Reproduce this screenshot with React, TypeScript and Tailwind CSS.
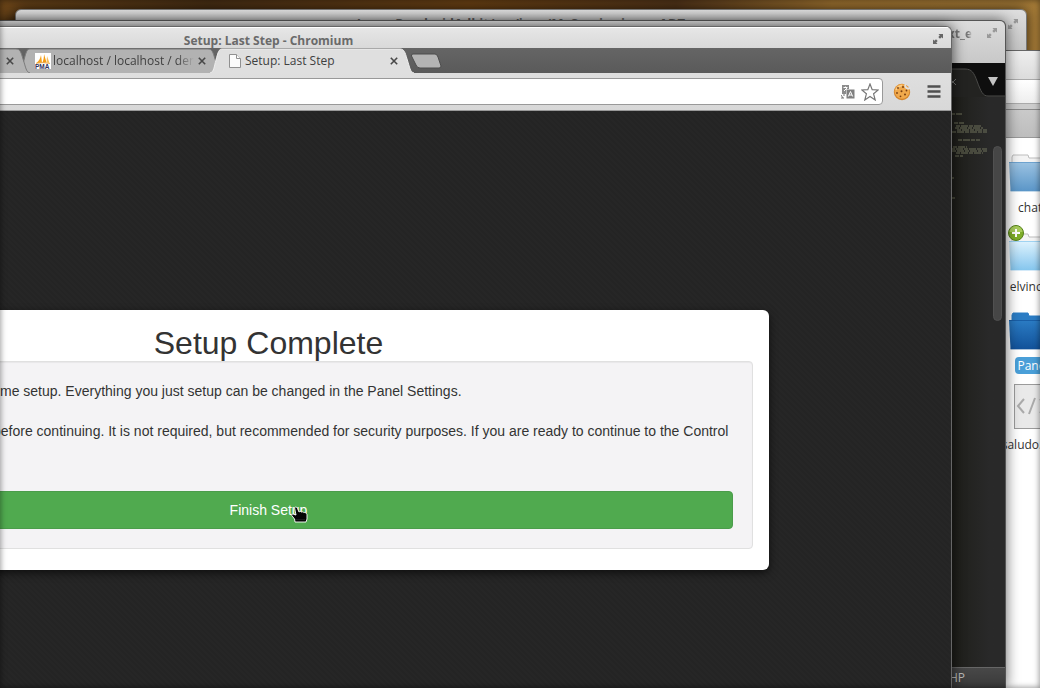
import React from 'react';

interface TabProps {
	title: string;
	icon: React.ReactNode;
	active?: boolean;
	className?: string;
}

interface DesktopItem {
	name: string;
	kind: 'folder' | 'new' | 'open' | 'file';
	selected?: boolean;
}

const FILES: DesktopItem[] = [
	{ name: 'chats', kind: 'folder' },
	{ name: 'elvincoo', kind: 'new' },
	{ name: 'Panel', kind: 'open', selected: true },
	{ name: 'saludo.php', kind: 'file' },
];

// [x, y, width] of each stroke in the editor minimap
const MINIMAP: [number, number, number][] = [
	[0, 5, 11],
	[3, 14, 10],
	[5, 17, 26],
	[4, 19, 28],
	[6, 21, 30],
	[1, 23, 35],
	[7, 31, 22],
	[2, 38, 14],
	[0, 40, 36],
	[1, 42, 35],
	[5, 44, 27],
	[4, 47, 8],
	[0, 69, 3],
	[0, 89, 5],
];

const FOLDER_COLORS = {
	folder: ['#9cc3e2', '#5b96c8'],
	new: ['#dff3fe', '#86c6ee'],
	open: ['#2b7cc4', '#12529a'],
};

function ExpandIcon({ className }: { className: string }) {
	return (
		<svg viewBox="0 0 10 10" className={className} fill="currentColor" aria-hidden="true">
			<path d="M5.500 0H10v4.500L8.500 3.200 7 4.700 5.300 3 6.800 1.500z" />
			<path d="M4.500 10H0V5.500l1.500 1.300L3 5.300 4.700 7 3.200 8.500z" />
		</svg>
	);
}

function CloseIcon() {
	return (
		<svg viewBox="0 0 8 8" className="size-2" stroke="#484848" strokeWidth="1.6" aria-hidden="true">
			<path d="M.8.8l6.4 6.4M7.2.8L.8 7.2" />
		</svg>
	);
}

function PageIcon() {
	return (
		<svg viewBox="0 0 12 14" className="h-3.5 w-3" fill="#fbfbfb" stroke="#909090" aria-hidden="true">
			<path d="M.5.5h7l4 4v9H.5z" />
			<path d="M7.5.5v4h4" />
		</svg>
	);
}

function PmaIcon() {
	return (
		<svg viewBox="0 0 16 16" className="size-4" aria-hidden="true">
			<rect width="16" height="16" fill="#fff" />
			<path d="M1.500 10C4 8 5.400 5 6 2l1 7.500z" fill="#f6a21c" />
			<path d="M7.500 9.500C8.500 7 9 4 9 1l2.500 8.500z" fill="#f39a10" />
			<path d="M11.500 9.500L12 3l2.500 7z" fill="#f9bd55" />
			<path d="M1 10.300q7-1.500 14 .2" stroke="#e08a1a" fill="none" strokeWidth=".7" />
			<text x="0" y="16" fontSize="6.500" fontWeight="bold" fontFamily="Liberation Sans, sans-serif" fill="#30305c">
				PMA
			</text>
		</svg>
	);
}

function Tab({ title, icon, active = false, className = '' }: TabProps) {
	return (
		<div className={`relative -ml-3 h-[25px] w-[204px] shrink-0 ${className}`}>
			<svg viewBox="0 0 204 25" className="absolute inset-0 size-full" aria-hidden="true">
				<path
					d="M0 25C4 24 4 19 6 12 8 4 9 1 12 1H190C194 1 195 4 197 11c3 9 3 13 7 14z"
					fill={active ? '#dfdfdf' : '#b2b2b2'}
				/>
				<path
					d="M0 25C4 24 4 19 6 12 8 4 9 1 12 1H190C194 1 195 4 197 11c3 9 3 13 7 14"
					fill="none"
					stroke={active ? '#efefef' : '#7a7a7a'}
				/>
			</svg>
			<button
				type="button"
				className="relative flex h-full w-full items-center pr-7 pl-[15px] text-left text-[12px] text-[#404040]"
			>
				<span className="flex w-5 shrink-0 justify-center">{icon}</span>
				<span
					className={`overflow-hidden whitespace-nowrap ${active ? '' : '[mask-image:linear-gradient(to_right,black_88%,transparent)]'}`}
				>
					{title}
				</span>
			</button>
			<button type="button" aria-label="Close tab" className="absolute top-[9px] right-4">
				<CloseIcon />
			</button>
		</div>
	);
}

function TranslateIcon() {
	return (
		<svg viewBox="0 0 14 14" className="size-3.5" aria-hidden="true">
			<path d="M1 0h7v4H5v5H1z" fill="#8c8c8c" />
			<path d="M2.500 2.500h4M4.500 1.500v1M3 6l3-3" stroke="#fff" fill="none" />
			<rect x="5.500" y="4.500" width="8" height="9" fill="#808080" />
			<path d="M7.300 11.500L9.500 6.500l2.200 5M8 10h3" stroke="#fff" fill="none" />
			<path d="M0 10l2 3m-2 0h3m-1-3h2" stroke="#777" fill="none" />
		</svg>
	);
}

function CookieIcon() {
	return (
		<svg viewBox="0 0 18 18" className="size-[18px]" aria-hidden="true">
			<circle cx="9" cy="9" r="8.200" fill="#d4852c" />
			<circle cx="9" cy="8.300" r="7.400" fill="#f0a94c" />
			<path d="M3 7q2-4 6-4.500" stroke="#f9cd8a" strokeWidth="1.500" fill="none" />
			<g fill="#7a3f12">
				<circle cx="5" cy="5" r=".9" />
				<circle cx="10" cy="4" r="1" />
				<circle cx="13.500" cy="7.500" r=".9" />
				<circle cx="8.500" cy="8.300" r="1" />
				<circle cx="4" cy="10" r=".9" />
				<circle cx="12" cy="11.500" r="1" />
				<circle cx="7.500" cy="13.300" r=".9" />
			</g>
			<path d="M13 .5a3 3 0 0 0 4.500 4" stroke="#dfdfdf" strokeWidth="2" fill="none" />
		</svg>
	);
}

function HandCursor() {
	return (
		<svg viewBox="0 0 17 17" className="absolute top-3.5 left-1/2 ml-[22px] h-[17px] w-[17px]" aria-hidden="true">
			<path
				d="M3.500 1.500c1.500-1 2.500 0 3 1L8 6c1-.8 2-.6 2.500.2 1-.8 2-.4 2.400.5 1-.6 2-.1 2.300.8.8.3.8 1 .8 1.500V13l-1 3H4l-.5-3L.8 9.500c-.3-1.200.7-1.700 1.700-1.200L5 9z"
				fill="#050505"
				stroke="#fff"
				strokeWidth=".9"
			/>
			<path d="M4.500 13.500h9" stroke="#555" strokeWidth=".6" strokeDasharray="1 1" />
		</svg>
	);
}

function FileIcon({ kind }: { kind: DesktopItem['kind'] }) {
	if (kind === 'file') {
		return (
			<svg viewBox="0 0 48 48" className="size-12" aria-hidden="true">
				<rect x="5.500" y="2.500" width="38" height="44" fill="#e9e9e9" stroke="#9b9b9b" />
				<path d="M15 17l-6 7 6 7M26 16l-6 16M31 17l6 7-6 7" fill="none" stroke="#aaa" strokeWidth="2" />
			</svg>
		);
	}
	const [light, dark] = FOLDER_COLORS[kind];
	const tab = kind === 'open' ? light : '#f4f4f4';
	return (
		<svg viewBox="0 0 48 48" className="size-12 overflow-visible" aria-hidden="true">
			<defs>
				<linearGradient id={`fill-${kind}`} x1="0" y1="0" x2="0" y2="1">
					<stop offset="0" stopColor={light} />
					<stop offset="1" stopColor={dark} />
				</linearGradient>
			</defs>
			<path d="M3 20V12l1-2h15l1 3h26v12H3z" fill={tab} stroke={kind === 'open' ? light : '#bdbdbd'} />
			<path d="M0 17h48l-1 29H1.500z" fill={`url(#fill-${kind})`} />
			<path d="M0 17.500h48M1.500 46h46" stroke={dark} opacity=".7" />
			{kind === 'new' && (
				<g>
					<circle cx="7" cy="9" r="7.500" fill="#7fae2a" stroke="#55801a" />
					<path d="M.5 8a6.500 6 0 0 1 13 0z" fill="#a8cc5c" />
					<path d="M7 5v8M3 9h8" stroke="#fff" strokeWidth="2" />
				</g>
			)}
		</svg>
	);
}

function BackWindow() {
	return (
		<section className="absolute top-[9px] right-[13px] bottom-0 left-[15px] rounded-t-md border border-[#777] bg-linear-to-b from-[#dedede] to-[#c4c4c4] to-[40px] shadow-[0_0_14px_rgba(0,0,0,0.7)]">
			<header className="flex h-6 items-center justify-between pt-1 pr-2 pl-2.5 text-[13px] font-bold text-[#666]">
				<CloseIcon />
				<span>Java - PandroidAdkit/src/java/MyService.java - ADT</span>
				<ExpandIcon className="size-2.5 text-[#999]" />
			</header>
		</section>
	);
}

function FileManager() {
	return (
		<section className="absolute top-[50px] right-[-200px] bottom-0 w-[240px] border-t border-[#666] bg-white">
			<div className="h-7 bg-linear-to-b from-[#eee] to-[#dcdcdc]" />
			<div className="h-[25px] border-y border-[#aaa] bg-linear-to-b from-white to-[#eee]" />
			<div className="h-1.5 border-b border-[#8a8a8a] bg-[#ccc]" />
			<div className="h-7 border-b border-[#999] bg-linear-to-b from-[#cacaca] to-[#bdbdbd]" />
			<ul className="ml-[9px] flex w-12 flex-col gap-2 pt-[7px]">
				{FILES.map((file) => (
					<li key={file.name} className="flex h-[71px] flex-col items-center gap-1.5">
						<FileIcon kind={file.kind} />
						<span
							className={`rounded px-0.5 text-[12px] leading-[17px] whitespace-nowrap ${file.selected ? 'bg-[#4a9fd8] text-white' : 'text-[#333]'}`}
						>
							{file.name}
						</span>
					</li>
				))}
			</ul>
		</section>
	);
}

function EditorWindow() {
	return (
		<section className="absolute top-5 right-[34px] bottom-0 left-0 flex flex-col overflow-hidden rounded-tr-md border-t border-r border-[#555] bg-[#232321] shadow-[0_0_14px_rgba(0,0,0,0.6)]">
			<header className="flex h-[42px] shrink-0 justify-end gap-[15px] bg-linear-to-b from-[#dcdcdc] to-[#c8c8c8] pt-[3px] pr-2">
				<span className="text-[12px] leading-5 font-bold text-[#777] [mask-image:linear-gradient(to_right,black_85%,transparent)]">
					xt_e
				</span>
				<ExpandIcon className="mt-1 size-2.5 text-[#999]" />
			</header>
			<div className="flex h-[34px] shrink-0 justify-end bg-[#0e0e0e]">
				<svg viewBox="0 0 55 34" className="h-[34px] w-[55px]" aria-hidden="true">
					<path d="M0 6h15c7 0 9 4 12 12 4 11 6 15 11 15h17v1H0z" fill="#232321" />
					<path d="M0 6h15c7 0 9 4 12 12 4 11 6 15 11 15h17" fill="none" stroke="#4a4a48" />
					<path d="M0 16l6 6M6 16l-6 6" stroke="#777" />
					<path d="M38 14h10l-5 9z" fill="#c4c4c4" />
				</svg>
			</div>
			<div className="flex grow justify-end bg-linear-to-l from-[#292929] from-[16px] to-[#1c1c17] to-[60px]">
				<svg viewBox="0 0 40 100" className="mt-3 h-[100px] w-10" aria-hidden="true">
					{MINIMAP.map(([x, y, width]) => (
						<path key={y} d={`M${x} ${y}h${width}`} stroke="#969a78" strokeDasharray="4 1 7 1" opacity=".65" />
					))}
				</svg>
				<div className="mt-[49px] mr-[3px] ml-0.5 h-[175px] w-[9px] rounded-full border border-[#505050] bg-[#464646]" />
			</div>
			<footer className="flex h-[21px] shrink-0 justify-end border-t border-[#666] bg-linear-to-b from-[#484848] to-[#393939] pr-10 text-[12px] leading-5 text-[#bbb]">
				PHP
			</footer>
		</section>
	);
}

function SetupCard() {
	return (
		<main className="flex grow flex-col items-center bg-[#252525] bg-[repeating-linear-gradient(45deg,#242424_0_2px,#262626_2px_4px)] pt-[199px] font-['Liberation_Sans',Arial,sans-serif] text-[#333]">
			<div className="w-[1001px] rounded-md bg-white px-4 pt-[15px] pb-[21px] shadow-[0_3px_9px_rgba(0,0,0,0.6)]">
				<h1 className="text-center text-[32px] leading-9">Setup Complete</h1>
				<div className="rounded border border-[#e0e0e0] bg-[#f4f3f5] p-[19px] text-[14px] leading-5 shadow-[inset_0_1px_1px_rgba(0,0,0,0.05)]">
					<div className="flex flex-col gap-5 pl-[189px] whitespace-nowrap">
						<p>time setup. Everything you just setup can be changed in the Panel Settings.</p>
						<p>
							before continuing. It is not required, but recommended for security purposes. If you are ready to
							continue to the Control
						</p>
					</div>
					<button
						type="button"
						className="relative mt-[50px] h-[38px] w-full rounded border border-[#4b9c4b] bg-[#50aa4f] text-white"
					>
						Finish Setup
						<HandCursor />
					</button>
				</div>
			</div>
		</main>
	);
}

function BrowserWindow() {
	return (
		<section className="absolute top-[26px] right-[88px] bottom-0 left-[-414px] flex flex-col overflow-hidden rounded-tr-md border-t border-r border-[#666] bg-[#dfdfdf] shadow-[0_0_14px_rgba(0,0,0,0.7)]">
			<header className="relative flex h-[21px] shrink-0 items-center justify-center border-t border-white bg-linear-to-b from-[#e6e6e6] to-[#d9d9d9] pt-1.5 text-[12px] font-bold text-[#6a6a6a]">
				Setup: Last Step - Chromium
				<ExpandIcon className="absolute top-1.5 right-2 size-2.5 text-[#666]" />
			</header>
			<nav className="flex h-[25px] shrink-0 bg-linear-to-b from-[#656565] to-[#5a5a5a] pl-[252px]">
				<Tab title="" icon={<PageIcon />} className="z-20" />
				<Tab title="localhost / localhost / den" icon={<PmaIcon />} className="z-10" />
				<Tab title="Setup: Last Step" icon={<PageIcon />} active className="z-30" />
				<button type="button" aria-label="New tab" className="-ml-1 self-center">
					<svg viewBox="0 0 32 16" className="h-4 w-8" aria-hidden="true">
						<path d="M3 1h22q2 0 3 3l3 9q0 2-2 2H10q-3 0-4-3L1.500 3Q1 1 3 1z" fill="#b4b4b4" stroke="#4d4d4d" />
					</svg>
				</button>
			</nav>
			<div className="flex h-[38px] shrink-0 items-center border-b border-[#999] bg-linear-to-b from-[#dfdfdf] to-[#d8d8d8] pr-2.5">
				<div className="flex h-[27px] grow items-center gap-1.5 rounded-sm border border-[#999] bg-white pr-[3px]">
					<input type="text" aria-label="Address" className="h-full min-w-0 grow bg-transparent outline-none" />
					<button type="button" aria-label="Translate this page">
						<TranslateIcon />
					</button>
					<button type="button" aria-label="Bookmark this page">
						<svg viewBox="0 0 18 18" className="size-[18px]" fill="#fff" stroke="#777" strokeWidth="1.200" aria-hidden="true">
							<path d="M9 1l2.200 5.600 6 .4-4.600 3.800L14.200 17 9 13.500 3.800 17l1.600-6.200L.8 7l6-.4z" />
						</svg>
					</button>
				</div>
				<button type="button" aria-label="Cookies" className="ml-2.5">
					<CookieIcon />
				</button>
				<button type="button" aria-label="Menu" className="ml-4">
					<svg viewBox="0 0 14 13" className="h-[13px] w-3.5" aria-hidden="true">
						<path d="M.5 1.500h13M.5 6.500h13M.5 11.500h13" stroke="#505050" strokeWidth="2.500" />
					</svg>
				</button>
			</div>
			<SetupCard />
		</section>
	);
}

export default function App() {
	return (
		<div className="relative min-h-screen overflow-hidden bg-[#553714] bg-[linear-gradient(to_right,#6b4519,#4a3015_20%,#6d4315_45%,#54361a_65%,#a17431_80%,#a87d38)] font-['Open_Sans','Noto_Sans',sans-serif]">
			<BackWindow />
			<FileManager />
			<EditorWindow />
			<BrowserWindow />
			{/* darkened screen edges */}
			<div className="pointer-events-none absolute inset-0 z-40 shadow-[inset_0_0_6px_rgba(0,0,0,0.5)]" />
		</div>
	);
}
